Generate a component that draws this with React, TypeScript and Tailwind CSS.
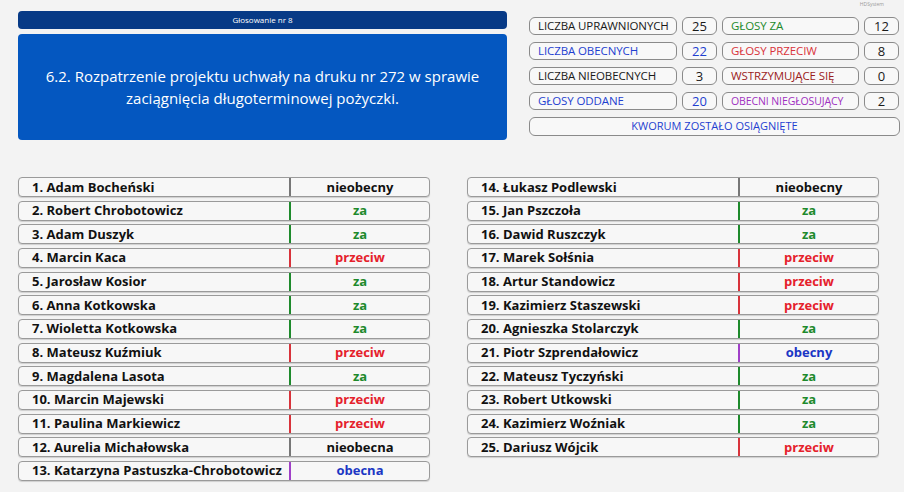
import React from 'react';

type Vote = 'za' | 'przeciw' | 'nieobecny' | 'nieobecna' | 'obecny' | 'obecna';

interface Member {
  name: string;
  vote: Vote;
}

const left: Member[] = [
  { name: '1. Adam Bocheński', vote: 'nieobecny' },
  { name: '2. Robert Chrobotowicz', vote: 'za' },
  { name: '3. Adam Duszyk', vote: 'za' },
  { name: '4. Marcin Kaca', vote: 'przeciw' },
  { name: '5. Jarosław Kosior', vote: 'za' },
  { name: '6. Anna Kotkowska', vote: 'za' },
  { name: '7. Wioletta Kotkowska', vote: 'za' },
  { name: '8. Mateusz Kuźmiuk', vote: 'przeciw' },
  { name: '9. Magdalena Lasota', vote: 'za' },
  { name: '10. Marcin Majewski', vote: 'przeciw' },
  { name: '11. Paulina Markiewicz', vote: 'przeciw' },
  { name: '12. Aurelia Michałowska', vote: 'nieobecna' },
  { name: '13. Katarzyna Pastuszka-Chrobotowicz', vote: 'obecna' },
];

const right: Member[] = [
  { name: '14. Łukasz Podlewski', vote: 'nieobecny' },
  { name: '15. Jan Pszczoła', vote: 'za' },
  { name: '16. Dawid Ruszczyk', vote: 'za' },
  { name: '17. Marek Sołśnia', vote: 'przeciw' },
  { name: '18. Artur Standowicz', vote: 'przeciw' },
  { name: '19. Kazimierz Staszewski', vote: 'przeciw' },
  { name: '20. Agnieszka Stolarczyk', vote: 'za' },
  { name: '21. Piotr Szprendałowicz', vote: 'obecny' },
  { name: '22. Mateusz Tyczyński', vote: 'za' },
  { name: '23. Robert Utkowski', vote: 'za' },
  { name: '24. Kazimierz Woźniak', vote: 'za' },
  { name: '25. Dariusz Wójcik', vote: 'przeciw' },
];

const voteStyle: Record<Vote, { text: string; line: string }> = {
  za: { text: 'text-[#1e8a2c]', line: 'bg-[#1e8a2c]' },
  przeciw: { text: 'text-[#e5212b]', line: 'bg-[#d8333b]' },
  nieobecny: { text: 'text-[#111111]', line: 'bg-[#777777]' },
  nieobecna: { text: 'text-[#111111]', line: 'bg-[#777777]' },
  obecny: { text: 'text-[#1b36c4]', line: 'bg-[#a040c8]' },
  obecna: { text: 'text-[#1b36c4]', line: 'bg-[#a040c8]' },
};

function MemberRow({ member }: { member: Member }) {
  const s = voteStyle[member.vote];
  return (
    <div className="flex h-[20px] items-stretch rounded-[4px] border border-[#9a9a9a] bg-[#f7f7f7] shadow-[0_1px_1px_rgba(0,0,0,0.15)]">
      <div className="flex w-[270px] items-center pl-[13px] text-[13px] font-bold leading-none text-[#111111] whitespace-nowrap">
        {member.name}
      </div>
      <div className={`w-[2px] ${s.line}`} />
      <div className={`flex flex-1 items-center justify-center text-[13px] font-bold leading-none ${s.text}`}>
        {member.vote}
      </div>
    </div>
  );
}

function StatBox({ children, className }: { children: React.ReactNode; className: string }) {
  return (
    <div
      className={`flex h-[18px] items-center whitespace-nowrap rounded-[6px] border border-[#8a8a8a] bg-[#f8f8f8] leading-none ${className}`}
    >
      {children}
    </div>
  );
}

const label = 'pl-[8px] text-[11.5px] tracking-[-0.1px]';
const num = 'justify-center text-[13px]';

export default function App() {
  return (
    <div className="h-[492px] w-[924px] bg-white" style={{ fontFamily: '"Open Sans", "Noto Sans", sans-serif' }}>
      <div className="relative h-[492px] w-[904px] bg-[#f3f3f3]">
        <div className="absolute right-[20px] top-[1px] text-[5px] text-[#9a9a9a]">HDSystem</div>

        <div className="flex gap-[22px] pl-[18px] pt-[11px]">
          {/* left: title */}
          <div className="flex w-[489px] flex-col gap-[5px]">
            <div className="flex h-[18px] items-center justify-center rounded-[4px] bg-[#073a86] text-[8px] text-white">
              Głosowanie nr 8
            </div>
            <div className="flex h-[106px] items-center justify-center rounded-[4px] bg-[#0457c0] px-4 text-center text-[15px] leading-[22px] text-white whitespace-nowrap">
              <p>
                6.2. Rozpatrzenie projektu uchwały na druku nr 272 w sprawie
                <br />
                zaciągnięcia długoterminowej pożyczki.
              </p>
            </div>
          </div>

          {/* right: stats */}
          <div className="flex w-[371px] flex-col gap-[7px] pt-[6px]">
            <div className="grid grid-cols-[148px_35px_137px_35px] gap-x-[5px] gap-y-[7px]">
              <StatBox className={`${label} text-[#1a1a1a]`}>LICZBA UPRAWNIONYCH</StatBox>
              <StatBox className={`${num} text-[#1a1a1a]`}>25</StatBox>
              <StatBox className={`${label} text-[#1e8a2c]`}>GŁOSY ZA</StatBox>
              <StatBox className={`${num} text-[#1a1a1a]`}>12</StatBox>

              <StatBox className={`${label} text-[#1f3fd0]`}>LICZBA OBECNYCH</StatBox>
              <StatBox className={`${num} text-[#1f3fd0]`}>22</StatBox>
              <StatBox className={`${label} text-[#d8333b]`}>GŁOSY PRZECIW</StatBox>
              <StatBox className={`${num} text-[#1a1a1a]`}>8</StatBox>

              <StatBox className={`${label} text-[#1a1a1a]`}>LICZBA NIEOBECNYCH</StatBox>
              <StatBox className={`${num} text-[#1a1a1a]`}>3</StatBox>
              <StatBox className={`${label} text-[#9b1c1c]`}>WSTRZYMUJĄCE SIĘ</StatBox>
              <StatBox className={`${num} text-[#1a1a1a]`}>0</StatBox>

              <StatBox className={`${label} text-[#1f3fd0]`}>GŁOSY ODDANE</StatBox>
              <StatBox className={`${num} text-[#1f3fd0]`}>20</StatBox>
              <StatBox className="pl-[8px] text-[10.5px] tracking-[-0.1px] text-[#a030c0]">OBECNI NIEGŁOSUJĄCY</StatBox>
              <StatBox className={`${num} text-[#1a1a1a]`}>2</StatBox>
            </div>
            <div className="flex h-[19px] items-center justify-center rounded-[6px] border border-[#8a8a8a] bg-[#f8f8f8] text-[11px] text-[#1f3fd0]">
              KWORUM ZOSTAŁO OSIĄGNIĘTE
            </div>
          </div>
        </div>

        {/* members */}
        <div className="mt-[37px] flex gap-[37px] pl-[18px]">
          <div className="flex w-[412px] flex-col gap-[3.67px]">
            {left.map((m) => (
              <MemberRow key={m.name} member={m} />
            ))}
          </div>
          <div className="flex w-[412px] flex-col gap-[3.67px]">
            {right.map((m) => (
              <MemberRow key={m.name} member={m} />
            ))}
          </div>
        </div>
      </div>
    </div>
  );
}
